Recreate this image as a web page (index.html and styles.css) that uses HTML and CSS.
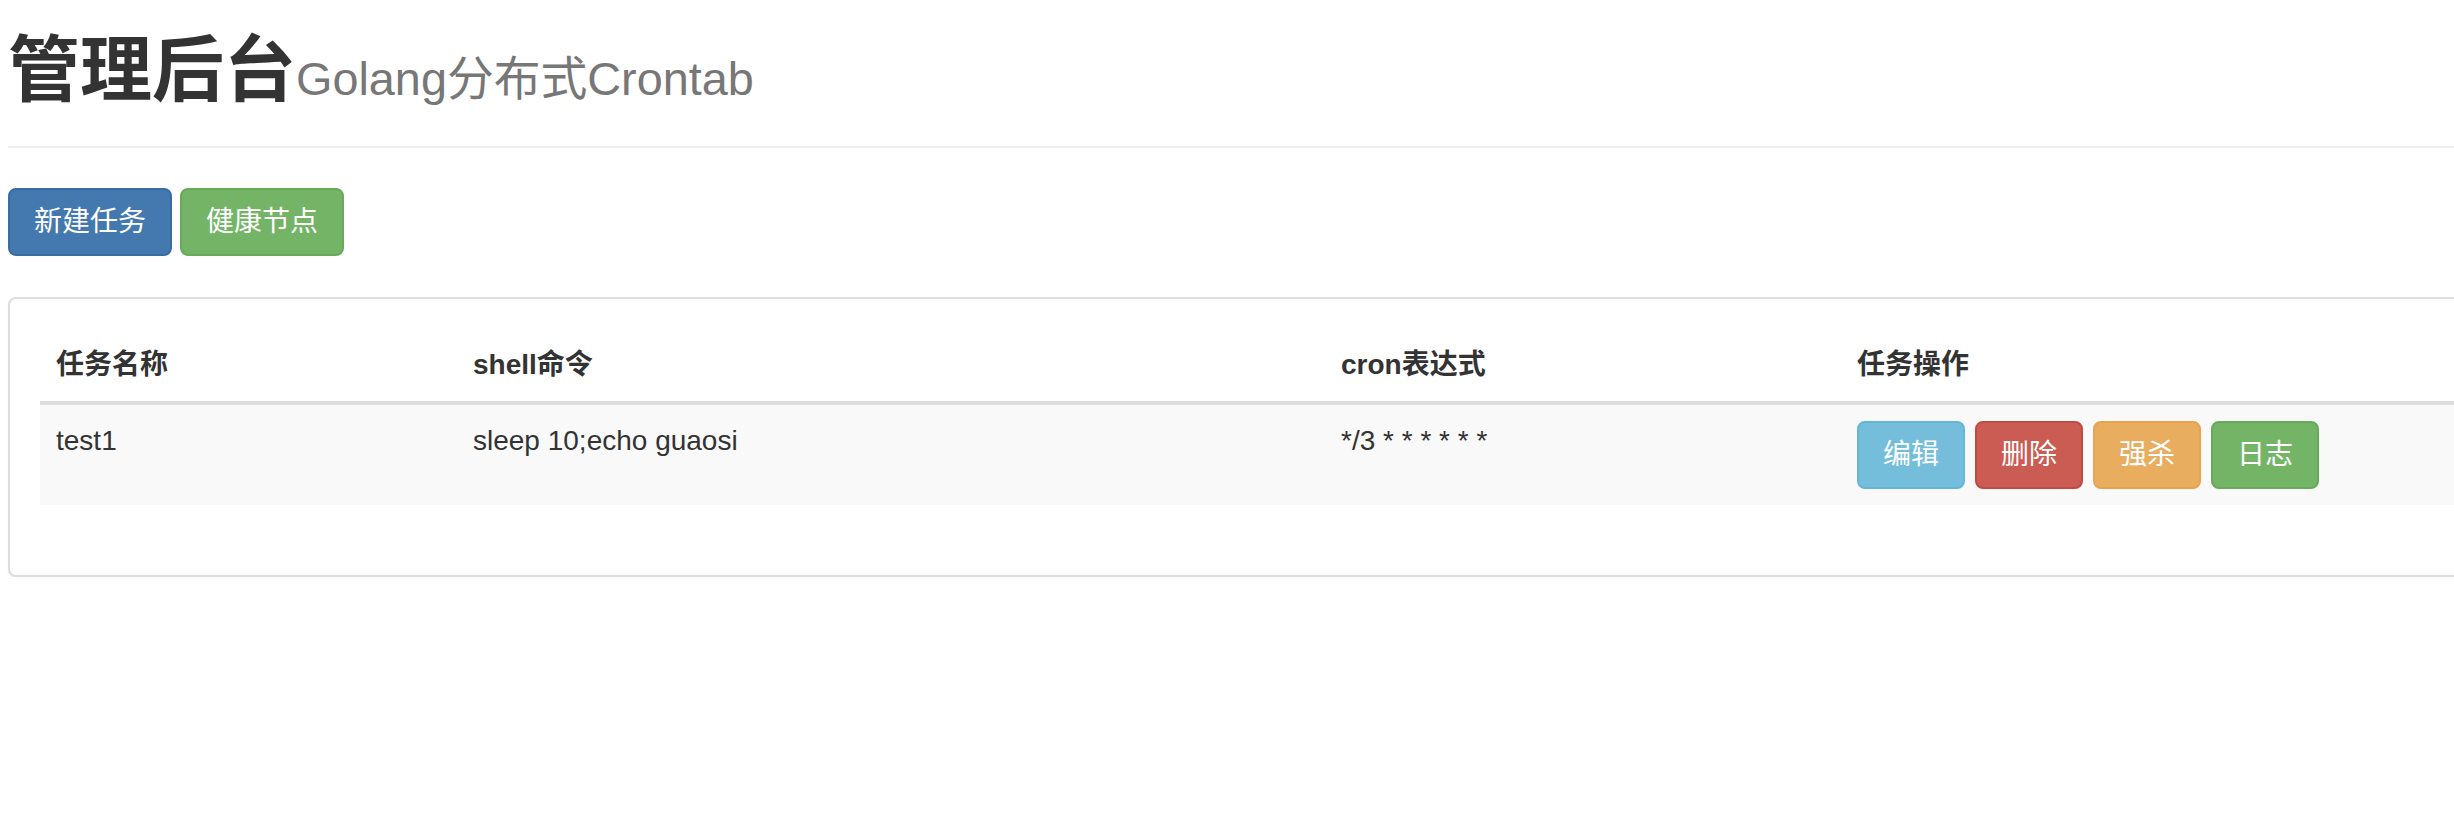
FILE: index.html
```html
<!DOCTYPE html>
<html lang="zh-CN">
<head>
<meta charset="utf-8">
<title>管理后台</title>
<link rel="stylesheet" href="styles.css">
</head>
<body>
<div class="container">
  <h1 class="page-title">管理后台<small class="subtitle">Golang分布式Crontab</small></h1>
  <hr class="divider">
  <div class="toolbar">
    <button class="btn btn-primary">新建任务</button>
    <button class="btn btn-success">健康节点</button>
  </div>
  <div class="panel">
    <div class="panel-body">
      <table class="table">
        <colgroup>
          <col class="col-name">
          <col class="col-cmd">
          <col class="col-cron">
          <col class="col-ops">
        </colgroup>
        <thead>
          <tr>
            <th>任务名称</th>
            <th>shell命令</th>
            <th>cron表达式</th>
            <th>任务操作</th>
          </tr>
        </thead>
        <tbody>
          <tr class="striped">
            <td>test1</td>
            <td>sleep 10;echo guaosi</td>
            <td>*/3 * * * * * *</td>
            <td>
              <div class="actions">
                <button class="btn btn-info">编辑</button>
                <button class="btn btn-danger">删除</button>
                <button class="btn btn-warning">强杀</button>
                <button class="btn btn-success">日志</button>
              </div>
            </td>
          </tr>
        </tbody>
      </table>
    </div>
  </div>
</div>
</body>
</html>
```

FILE: styles.css
```css
html, body {
  margin: 0;
  padding: 0;
  overflow: hidden;
  background: #fff;
}

body {
  font-family: "Liberation Sans", "Noto Sans CJK SC", sans-serif;
  font-size: 28px;
  line-height: 40px;
  color: #333;
}

.container {
  width: 2600px;
  padding-left: 8px;
}

.page-title {
  margin: 31px 0 0;
  height: 79px;
  font-size: 72px;
  line-height: 1.1;
  font-weight: 600;
  color: #333;
}

.subtitle {
  font-size: 65%;
  line-height: 1;
  font-weight: 400;
  color: #777;
}

.divider {
  margin: 36px 0 40px;
  border: 0;
  border-top: 2px solid #eee;
  height: 0;
}

.toolbar {
  display: flex;
  gap: 8px;
}

.btn {
  font-family: "Liberation Sans", "Noto Sans CJK SC", sans-serif;
  font-size: 28px;
  line-height: 40px;
  padding: 12px 24px;
  border: 2px solid transparent;
  border-radius: 8px;
  color: #fff;
  cursor: pointer;
  font-weight: 400;
}

.btn-primary { background: #4479b0; border-color: #3a6ca1; }
.btn-success { background: #73b466; border-color: #67ab5a; }
.btn-info { background: #74bedc; border-color: #65b5d7; }
.btn-danger { background: #ca5c53; border-color: #c34a43; }
.btn-warning { background: #e8ad5f; border-color: #e6a44f; }

.panel {
  margin-top: 41px;
  border: 2px solid #ddd;
  border-radius: 8px;
  background: #fff;
  box-shadow: 0 2px 2px rgba(0, 0, 0, 0.05);
}

.panel-body {
  padding: 30px;
}

.table {
  width: 100%;
  table-layout: fixed;
  border-collapse: collapse;
  border-spacing: 0;
  margin-bottom: 40px;
}

.col-name { width: 417px; }
.col-cmd { width: 868px; }
.col-cron { width: 516px; }

.table th,
.table td {
  padding: 16px;
  text-align: left;
  vertical-align: top;
  line-height: 40px;
}

.table th {
  font-weight: 700;
  border-bottom: 4px solid #ddd;
}

.striped td {
  background: #f9f9f9;
}

.actions {
  display: flex;
  gap: 10px;
}
```
